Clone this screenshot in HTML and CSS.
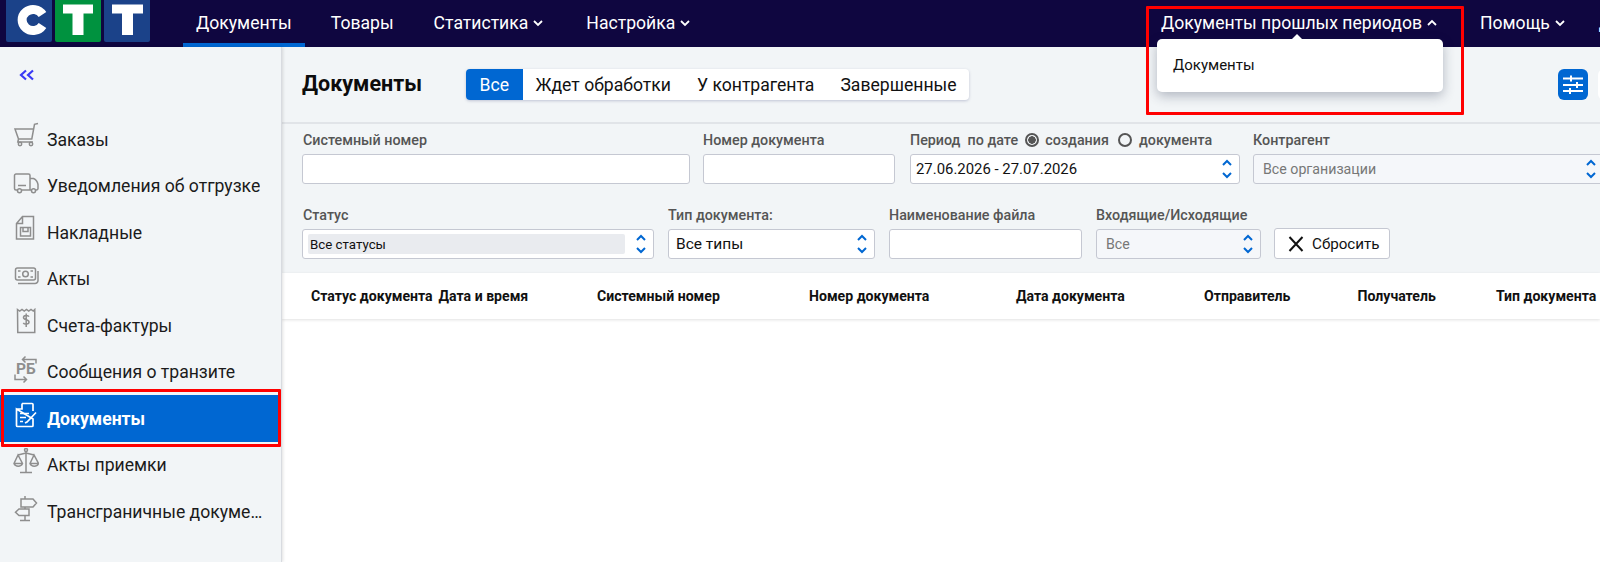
FILE: index.html
```html
<!DOCTYPE html>
<html lang="ru">
<head>
<meta charset="utf-8">
<title>Документы</title>
<link rel="stylesheet" href="styles.css">
</head>
<body>
<header class="topbar">
  <svg class="logo" width="150" height="43" viewBox="0 0 150 43">
    <rect x="6" y="-4" width="46" height="46" rx="2" fill="#1b4289"/>
    <rect x="55" y="-4" width="46" height="46" rx="2" fill="#00923f"/>
    <rect x="104" y="-4" width="46" height="46" rx="2" fill="#1b4289"/>
    <path d="M42.500 14.500A11 10.500 0 1 0 42.500 25.500" fill="none" stroke="#fff" stroke-width="9"/>
    <path d="M63 4.500h30v9H83.500V35h-11V13.500H63z" fill="#fff"/>
    <path d="M112 4.500h31v9h-10V35h-11V13.500h-10z" fill="#fff"/>
  </svg>
  <nav class="nav nav-left">
    <a class="nav-item active">Документы</a>
    <a class="nav-item nav-goods">Товары</a>
    <a class="nav-item has-chev">Статистика<svg class="chev" viewBox="0 0 12 8"><path d="M2 2l4 4 4-4"/></svg></a>
    <a class="nav-item has-chev">Настройка<svg class="chev" viewBox="0 0 12 8"><path d="M2 2l4 4 4-4"/></svg></a>
  </nav>
  <nav class="nav nav-right">
    <a class="nav-item has-chev">Документы прошлых периодов<svg class="chev" viewBox="0 0 12 8"><path d="M2 6l4-4 4 4"/></svg></a>
    <a class="nav-item has-chev">Помощь<svg class="chev" viewBox="0 0 12 8"><path d="M2 2l4 4 4-4"/></svg></a>
    <a class="nav-item nav-last">Дмитрий</a>
  </nav>
</header>

<div class="layout">
  <aside class="sidebar">
    <button class="collapse"><svg width="16" height="12" viewBox="0 0 16 12"><path d="M7 1.500L2 6l5 4.500M14 1.500L9 6l5 4.500"/></svg></button>
    <ul class="menu">
      <li class="menu-item"><svg class="mi" viewBox="0 0 26 34"><path d="M25 1.500l-3.500 .8-2.700 14.700H5.500L2 7h18.300M5.500 17l-.7 3H20"/><circle cx="7" cy="22" r="1.700"/><circle cx="18" cy="22" r="1.700"/></svg><span>Заказы</span></li>
      <li class="menu-item"><svg class="mi" viewBox="0 0 26 34"><path d="M4 21H3a1.500 1.500 0 0 1-1.500-1.500V6.500A1.500 1.500 0 0 1 3 5h12.500a1.500 1.500 0 0 1 1.500 1.500V21H9M17 9.500h3.500c2.500 1 4 3.500 4.500 6v4a1.500 1.500 0 0 1-1.500 1.500H23M17 21h1"/><path d="M5 16.500h8"/><circle cx="6.500" cy="21.700" r="2"/><circle cx="20.500" cy="21.700" r="2"/></svg><span>Уведомления об отгрузке</span></li>
      <li class="menu-item"><svg class="mi" viewBox="0 0 26 34"><path d="M9.500 1.500H20.500V24H3.500V8.500zM9.500 1.500V8.500H3.500"/><path d="M7.500 12.500h10v8.500h-10zM10 12.500v4h5v-4"/></svg><span>Накладные</span></li>
      <li class="menu-item"><svg class="mi" viewBox="0 0 26 34"><rect x="2.500" y="6" width="20" height="12" rx="2"/><circle cx="12.500" cy="12" r="2.800"/><path d="M5 9h2.500M5 15h2.500M17.500 9H20M17.500 15H20M25 9v9.500a3 3 0 0 1-3 3H5"/></svg><span>Акты</span></li>
      <li class="menu-item"><svg class="mi" viewBox="0 0 26 34"><path d="M4.500 1.500l2.250 1.500L9 1.500l2.250 1.500 2.250-1.500 2.250 1.500 2.250-1.500 2.250 1.500 1.500-1.500V24.500h-17z"/><path d="M16 8.700c-1-1.700-5.500-1.700-5.500 .9 0 2.900 5.500 1.400 5.500 4.300 0 2.700-4.700 2.700-5.700 .9M13.200 5.500v13.500"/></svg><span>Счета-фактуры</span></li>
      <li class="menu-item"><svg class="mi" viewBox="0 0 26 34"><text x="3" y="19" class="mi-text">РБ</text><path d="M10 4.500h13v4M12.500 1.500l-3 3 3 3M2 19.500v5h11M10.500 21.500l3 3-3 3"/></svg><span>Сообщения о транзите</span></li>
      <li class="menu-item selected"><svg class="mi" viewBox="0 0 26 34"><path d="M9 2.500h10a1 1 0 0 1 1 1V10M20 18v6.500a1 1 0 0 1-1 1H4.500a1 1 0 0 1-1-1V8zM9 2.500V8H3.500"/><path d="M7 12.500h9M7 16.500h6M7 20.500h3M12 22l2-1 9-9.500"/></svg><span>Документы</span></li>
      <li class="menu-item"><svg class="mi" viewBox="0 0 26 34"><circle cx="13" cy="2" r="1.500"/><path d="M13 3.500V24M7 24.500h12M5 7l8-2 8 2M5 7L1 15.500a4.500 4 0 0 0 8.500 0zM1 15.500h8.500M21 7l-4 8.500a4.500 4 0 0 0 8.500 0zM16.500 15.500h9"/></svg><span>Акты приемки</span></li>
      <li class="menu-item"><svg class="mi" viewBox="0 0 26 34"><path d="M12 2v3M12 13v2M12 21.500v4.500M7 26.500h10M8 5h12l3.500 4-3.500 4H8zM16 15H6l-3.500 3.200L6 21.500h10z"/></svg><span>Трансграничные документы</span></li>
    </ul>
  </aside>

  <main class="main">
    <div class="title-row">
      <h1 class="title">Документы</h1>
      <div class="tabs">
        <a class="tab on">Все</a>
        <a class="tab">Ждет обработки</a>
        <a class="tab">У контрагента</a>
        <a class="tab">Завершенные</a>
      </div>
      <div class="title-tools">
        <button class="tool tool-blue"><svg width="22" height="20" viewBox="0 0 22 20"><path d="M1 3.500h20M1 10h20M1 16h20"/><path d="M9 .5v6M15 7v6M8 13v6"/></svg></button>
        <button class="tool"></button>
      </div>
    </div>

    <section class="filters">
      <div class="filter-row row-a">
        <div class="field f-sys"><label class="lbl">Системный номер</label><div class="ctl"></div></div>
        <div class="field f-num"><label class="lbl">Номер документа</label><div class="ctl"></div></div>
        <div class="field f-per">
          <div class="lbl lbl-radio">Период&nbsp; по дате <i class="radio checked"></i> создания <i class="radio radio-second"></i> документа</div>
          <div class="ctl sel val"><span class="val-date">27.06.2026 - 27.07.2026</span><svg class="updown" viewBox="0 0 12 22"><path d="M2 7l4-4 4 4M2 15l4 4 4-4"/></svg></div>
        </div>
        <div class="field f-org"><label class="lbl">Контрагент</label><div class="ctl sel dis"><span>Все организации</span><svg class="updown" viewBox="0 0 12 22"><path d="M2 7l4-4 4 4M2 15l4 4 4-4"/></svg></div></div>
      </div>
      <div class="filter-row row-b">
        <div class="field f-st"><label class="lbl">Статус</label><div class="ctl sel pad"><span class="chip">Все статусы</span><svg class="updown" viewBox="0 0 12 22"><path d="M2 7l4-4 4 4M2 15l4 4 4-4"/></svg></div></div>
        <div class="field f-ty"><label class="lbl">Тип документа:</label><div class="ctl sel val"><span class="val-type">Все типы</span><svg class="updown" viewBox="0 0 12 22"><path d="M2 7l4-4 4 4M2 15l4 4 4-4"/></svg></div></div>
        <div class="field f-fn"><label class="lbl">Наименование файла</label><div class="ctl"></div></div>
        <div class="field f-io"><label class="lbl">Входящие/Исходящие</label><div class="ctl sel dis"><span>Все</span><svg class="updown" viewBox="0 0 12 22"><path d="M2 7l4-4 4 4M2 15l4 4 4-4"/></svg></div></div>
        <button class="reset"><svg width="16" height="16" viewBox="0 0 16 16"><path d="M1.500 1l13 14M14.500 1l-13 14"/></svg>Сбросить</button>
      </div>
    </section>

    <div class="thead">
      <span>Статус документа</span>
      <span>Дата и время</span>
      <span>Системный номер</span>
      <span>Номер документа</span>
      <span>Дата документа</span>
      <span>Отправитель</span>
      <span>Получатель</span>
      <span>Тип документа</span>
    </div>
    <div class="tbody"></div>
  </main>
</div>

<div class="dropdown"><span class="caret"></span>Документы</div>
<div class="mark mark-top"></div>
<div class="mark mark-side"></div>
</body>
</html>
```
FILE: styles.css
```css
* { box-sizing: border-box; }
html, body { margin: 0; height: 100%; }
body {
  width: 1600px; height: 562px; overflow: hidden; position: relative;
  font-family: Roboto, "Liberation Sans", sans-serif; color: #111; background: #fff;
}
.topbar { height: 47px; background: #0f0640; display: flex; position: relative; overflow: hidden; }
.logo { flex: none; display: block; }
.nav { display: flex; height: 47px; }
.nav-left { margin-left: 33px; }
.nav-item {
  display: flex; align-items: center; height: 47px; padding: 0 13px 2px; margin-right: 13px;
  color: #fff; font-size: 17.600px; white-space: nowrap;
}
.nav-item.has-chev { margin-right: 16px; }
.nav-item.active { box-shadow: inset 0 -4px 0 #0067d2; }
.nav-goods { margin-right: 14px; }
.nav-last { margin-left: -9px; }
.chev { width: 12px; height: 8px; margin-left: 4px; fill: none; stroke: #fff; stroke-width: 1.800; }
.nav-right { position: absolute; left: 1148px; top: 0; }
.layout { display: flex; height: 515px; }
.sidebar {
  width: 282px; flex: none; background: #f2f5f7; border-right: 1px solid #d8dbe0;
  box-shadow: 1px 0 3px rgba(0,0,0,.12); position: relative; z-index: 1;
}
.collapse { display: block; border: 0; background: none; padding: 0; margin: 22px 0 0 19px; height: 12px; }
.collapse svg { display: block; fill: none; stroke: #3a3af5; stroke-width: 2.200; }
.menu { list-style: none; margin: 35px 0 0; padding: 0; }
.menu-item {
  height: 46.500px; display: flex; align-items: center; padding: 0 18px 0 13px;
  font-size: 17.600px; color: #1b1b1b; gap: 8px;
}
.menu-item span { overflow: hidden; white-space: nowrap; text-overflow: ellipsis; padding-top: 1px; }
.mi { width: 26px; height: 34px; flex: none; fill: none; stroke: #8e8e8e; stroke-width: 1.500; }
.mi-text { font: 700 15.500px Roboto, sans-serif; fill: #8e8e8e; stroke: none; }
.menu-item.selected { background: #0067d2; color: #fff; font-weight: 700; }
.menu-item.selected .mi { stroke: #fff; stroke-width: 1.700; }
.main { flex: 1; min-width: 0; display: flex; flex-direction: column; background: #f2f5f7; }
.title-row { height: 77px; display: flex; align-items: flex-start; border-bottom: 2px solid #e1e4e8; padding: 22px 0 0 20px; flex: none; }
.title { margin: 0; font-size: 21.500px; line-height: 30px; font-weight: 700; width: 164px; color: #0c0c0c; }
.tabs { display: flex; background: #fff; border-radius: 4px; box-shadow: 0 1px 3px rgba(40,50,110,.25); height: 31px; overflow: hidden; }
.tab { display: flex; align-items: center; padding: 0 13px; font-size: 17.600px; }
.tab:last-child { padding-right: 12px; }
.tab.on { background: #0067d2; color: #fff; padding: 0 13.500px; }
.title-tools { position: absolute; left: 1558px; top: 69px; display: flex; gap: 10px; }
.tool { width: 30px; height: 31px; border: 0; border-radius: 6px; background: #fff; padding: 0; display: flex; align-items: center; justify-content: center; }
.tool-blue { background: #0067d2; }
.tool svg { fill: none; stroke: #fff; stroke-width: 2; }
.filters { height: 149px; flex: none; padding: 6px 0 0 20px; }
.filter-row { display: flex; }
.row-a { margin-bottom: 21px; }
.field { flex: none; margin-right: 14px; }
.lbl { display: block; height: 24px; line-height: 20px; font-size: 14.300px; font-weight: 500; color: #555; white-space: nowrap; }
.f-sys .lbl, .f-st .lbl { padding-left: 1px; }
.lbl-radio { display: flex; align-items: flex-start; gap: 2px; white-space: pre; }
.radio { width: 14px; height: 14px; border-radius: 50%; border: 2px solid #555; display: inline-block; margin: 3px 1px 0; flex: none; }
.radio-second { margin-left: 4px; }
.radio.checked { background: radial-gradient(circle, #555 0 3.500px, #f2f5f7 4px); }
.ctl { height: 30px; background: #fff; border: 1px solid #c5c8d2; border-radius: 3px; display: flex; align-items: center; font-size: 14.200px; position: relative; }
.sel.val { padding-left: 5px; }
.val-date { font-size: 14.900px; }
.val-type { font-size: 15.500px; margin-left: 2px; }
.sel.dis { background: #f5f7fa; color: #777; padding-left: 9px; }
.sel.pad { padding: 0 5px; }
.f-sys { width: 388px; margin-right: 13px; }
.f-num { width: 192px; margin-right: 15px; }
.f-per { width: 330px; margin-right: 13px; }
.f-org { width: 360px; margin-right: 0; }
.f-st { width: 352px; margin-right: 14px; }
.f-ty { width: 207px; }
.f-fn { width: 193px; margin-right: 14px; }
.f-io { width: 165px; margin-right: 13px; }
.chip { background: #e9ebef; font-size: 13.300px; height: 20px; line-height: 21px; width: 317px; padding-left: 2px; border-radius: 2px; }
.updown { position: absolute; right: 6px; top: 3px; width: 12px; height: 22px; fill: none; stroke: #0067d2; stroke-width: 2; }
.f-org .updown { right: auto; left: 331px; }
.reset { align-self: flex-end; width: 116px; height: 31px; background: #fff; border: 1px solid #c5c8d2; border-radius: 3px; display: flex; align-items: center; padding: 0 0 0 13px; gap: 8px; font: 15.200px Roboto, sans-serif; color: #111; }
.reset svg { fill: none; stroke: #111; stroke-width: 2; }
.thead { height: 46px; flex: none; background: #fff; display: grid; grid-template-columns: 127.600px 158.400px 212px 207px 188px 153.500px 138.500px 120px; align-items: center; padding-left: 29px; font-size: 14.100px; font-weight: 700; box-shadow: 0 1px 3px rgba(0,0,0,.12); white-space: nowrap; position: relative; }
.tbody { flex: 1; background: #fff; }
.dropdown { position: absolute; left: 1157px; top: 39px; width: 286px; height: 53px; background: #fff; border-radius: 5px; padding: 16px 16px; line-height: 20px; font-size: 15px; box-shadow: 0 4px 12px rgba(30,40,70,.3); z-index: 3; }
.caret { position: absolute; left: 135px; top: -5px; border: 5px solid transparent; border-top: 0; border-bottom-color: #fff; }
.mark { position: absolute; border: 3px solid #f00; z-index: 4; pointer-events: none; border-radius: 1px; }
.mark-top { left: 1146px; top: 6px; width: 318px; height: 109px; }
.mark-side { left: 1px; top: 389px; width: 280px; height: 58px; }
```
